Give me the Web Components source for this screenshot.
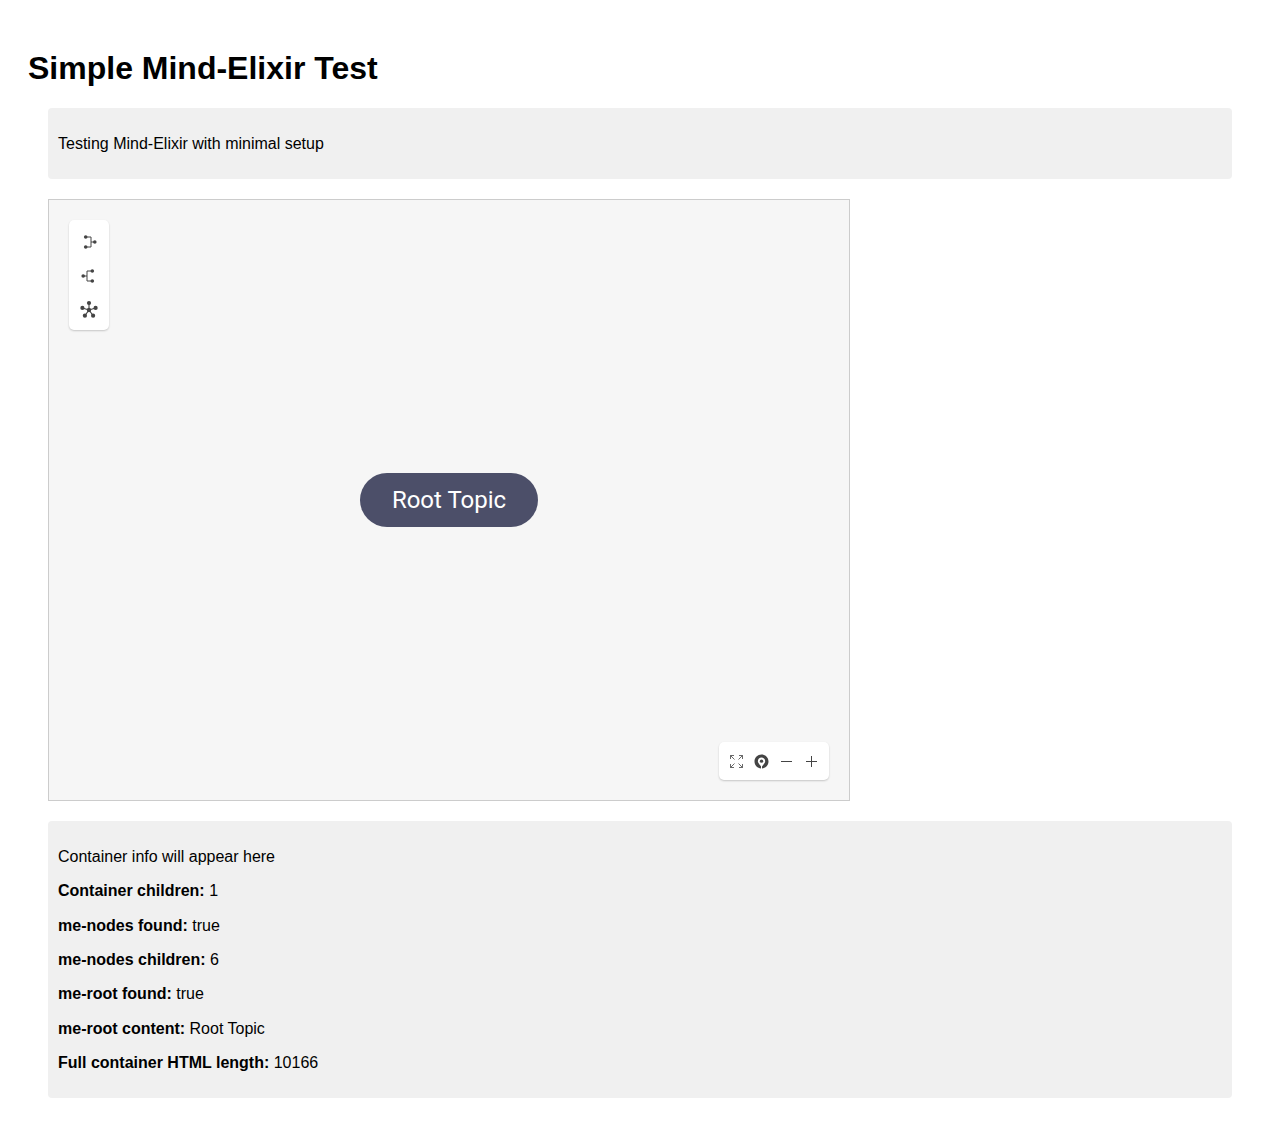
<!DOCTYPE html>
<html lang="en">
<head>
<meta charset="utf-8">
<title>Simple Mind-Elixir Test</title>
<style>
  body { margin: 0; background: #fff; color: #000; font-family: Arial, "Liberation Sans", sans-serif; font-size: 16px; line-height: 19px; }
</style>
</head>
<body>
<test-page>
  <span slot="title">Simple Mind-Elixir Test</span>
  <info-box><info-line>Testing Mind-Elixir with minimal setup</info-line></info-box>
  <mind-map topic="Root Topic"></mind-map>
  <info-box class="report">
    <info-line>Container info will appear here</info-line>
    <info-line label="Container children:">1</info-line>
    <info-line label="me-nodes found:">true</info-line>
    <info-line label="me-nodes children:">6</info-line>
    <info-line label="me-root found:">true</info-line>
    <info-line label="me-root content:">Root Topic</info-line>
    <info-line label="Full container HTML length:">10166</info-line>
  </info-box>
</test-page>

<script>
class TestPage extends HTMLElement {
  constructor() {
    super();
    this.attachShadow({ mode: 'open' }).innerHTML = `
      <style>
        :host { display: block; padding: 28px; }
        h1 { margin: 22px 0; font-size: 32px; line-height: 36px; font-weight: bold; }
        main { display: flex; flex-direction: column; gap: 20px; margin: 0 20px 20px; }
        ::slotted(.report) { min-height: 277px; }
      </style>
      <h1><slot name="title"></slot></h1>
      <main><slot></slot></main>`;
  }
}

class InfoBox extends HTMLElement {
  constructor() {
    super();
    this.attachShadow({ mode: 'open' }).innerHTML = `
      <style>
        :host { display: flex; flex-direction: column; justify-content: space-between; box-sizing: border-box;
                padding: 26px 10px; border-radius: 4px; background: #f0f0f0; }
      </style>
      <slot></slot>`;
  }
}

class InfoLine extends HTMLElement {
  constructor() {
    super();
    this.attachShadow({ mode: 'open' }).innerHTML = `
      <style>:host { display: block; } p { margin: 0; }</style>
      <p><slot></slot></p>`;
  }
  connectedCallback() {
    const label = this.getAttribute('label');
    if (!label) return;
    const strong = document.createElement('strong');
    strong.textContent = label;
    this.shadowRoot.querySelector('p').prepend(strong, ' ');
  }
}

const ICONS = {
  left: ['0 0 20 20', '<path d="M7 5h5v10H7M12 10h4" fill="none" stroke="currentColor"/><circle cx="6.700" cy="5" r="1.800"/><circle cx="6.700" cy="15" r="1.800"/><circle cx="15.800" cy="10" r="1.800"/>'],
  right: ['0 0 20 20', '<path d="M13 5H8v10h5M8 10H4" fill="none" stroke="currentColor"/><circle cx="13.300" cy="5" r="1.800"/><circle cx="13.300" cy="15" r="1.800"/><circle cx="4.200" cy="10" r="1.800"/>'],
  side: ['0 0 20 20', '<path d="M10 10V3M10 10l6.6-2.1M10 10l4.1 5.6M10 10l-4.1 5.6M10 10L3.4 7.9" fill="none" stroke="currentColor" stroke-width="1.1"/><circle cx="10" cy="10" r="2.2"/><circle cx="10" cy="3" r="2.1"/><circle cx="16.6" cy="7.9" r="2.1"/><circle cx="14.1" cy="15.7" r="2.1"/><circle cx="5.9" cy="15.7" r="2.1"/><circle cx="3.4" cy="7.9" r="2.1"/>'],
  full: ['0 0 15 15', '<path d="M1.500 5V1.500H5M1.500 1.500L5.500 5.500M10 1.500h3.500V5M13.500 1.500l-4 4M1.500 10v3.500H5M1.500 13.500l4-4M10 13.500h3.500V10M13.500 13.500l-4-4" fill="none" stroke="currentColor" stroke-width=".8"/>'],
  center: ['32 32 960 960', '<circle cx="514" cy="488" r="107"/><path d="M512 64C264.500 64 64 264.500 64 512c0 236.800 183.500 428.800 416 445.900v-134.400c-53.300-59.700-200.500-230.400-200.500-334.900 0-130.100 104.500-234.700 234.600-234.700s234.700 104.600 234.700 234.700c0 61.900-49.100 153.600-145.100 270.900l-59.700 68.300V960C776.500 942.900 960 748.800 960 512c0-247.500-200.500-448-448-448z"/>'],
  minus: ['0 0 15 15', '<path d="M2 7.500h11" stroke="currentColor"/>'],
  plus: ['0 0 15 15', '<path d="M2 7.500h11M7.500 2v11" stroke="currentColor"/>']
};

class ToolButton extends HTMLElement {
  constructor() { super(); this.attachShadow({ mode: 'open' }); }
  connectedCallback() {
    const [box, shape] = ICONS[this.getAttribute('icon')];
    this.shadowRoot.innerHTML = `
      <style>
        :host { display: block; }
        button { display: block; margin: 0; padding: 0; border: 0; background: none; color: #444; cursor: pointer; }
        svg { display: block; width: var(--icon-size); height: var(--icon-size); fill: currentColor; }
      </style>
      <button type="button" aria-label="${this.getAttribute('label')}"><svg viewBox="${box}" aria-hidden="true">${shape}</svg></button>`;
  }
}

class MindMap extends HTMLElement {
  constructor() {
    super();
    this.attachShadow({ mode: 'open' }).innerHTML = `
      <style>
        :host { display: flex; align-items: center; justify-content: center; position: relative; box-sizing: border-box;
                width: 100%; max-width: 802px; height: 602px; border: 1px solid #ccc; background: #f6f6f6; }
        .root { padding: 12px 32px; border-radius: 30px; background: #4c4f69; color: #fff;
                font-family: Roboto, sans-serif; font-size: 24px; line-height: 30px; white-space: nowrap; }
        .bar { position: absolute; display: flex; border-radius: 5px; background: #fff; box-shadow: 0 1px 2px #0003; }
        .layout { --icon-size: 20px; top: 20px; left: 20px; flex-direction: column; gap: 14px; padding: 12px 10px 10px; }
        .view { --icon-size: 15px; right: 20px; bottom: 20px; gap: 10px; padding: 12px 10px 11px; }
      </style>
      <div class="root"></div>
      <div class="bar layout">
        <tool-button icon="left" label="Left layout"></tool-button>
        <tool-button icon="right" label="Right layout"></tool-button>
        <tool-button icon="side" label="Side layout"></tool-button>
      </div>
      <div class="bar view">
        <tool-button icon="full" label="Full screen"></tool-button>
        <tool-button icon="center" label="Center map"></tool-button>
        <tool-button icon="minus" label="Zoom out"></tool-button>
        <tool-button icon="plus" label="Zoom in"></tool-button>
      </div>`;
  }
  connectedCallback() {
    this.shadowRoot.querySelector('.root').textContent = this.getAttribute('topic');
  }
}

customElements.define('test-page', TestPage);
customElements.define('info-box', InfoBox);
customElements.define('info-line', InfoLine);
customElements.define('tool-button', ToolButton);
customElements.define('mind-map', MindMap);
</script>
</body>
</html>
